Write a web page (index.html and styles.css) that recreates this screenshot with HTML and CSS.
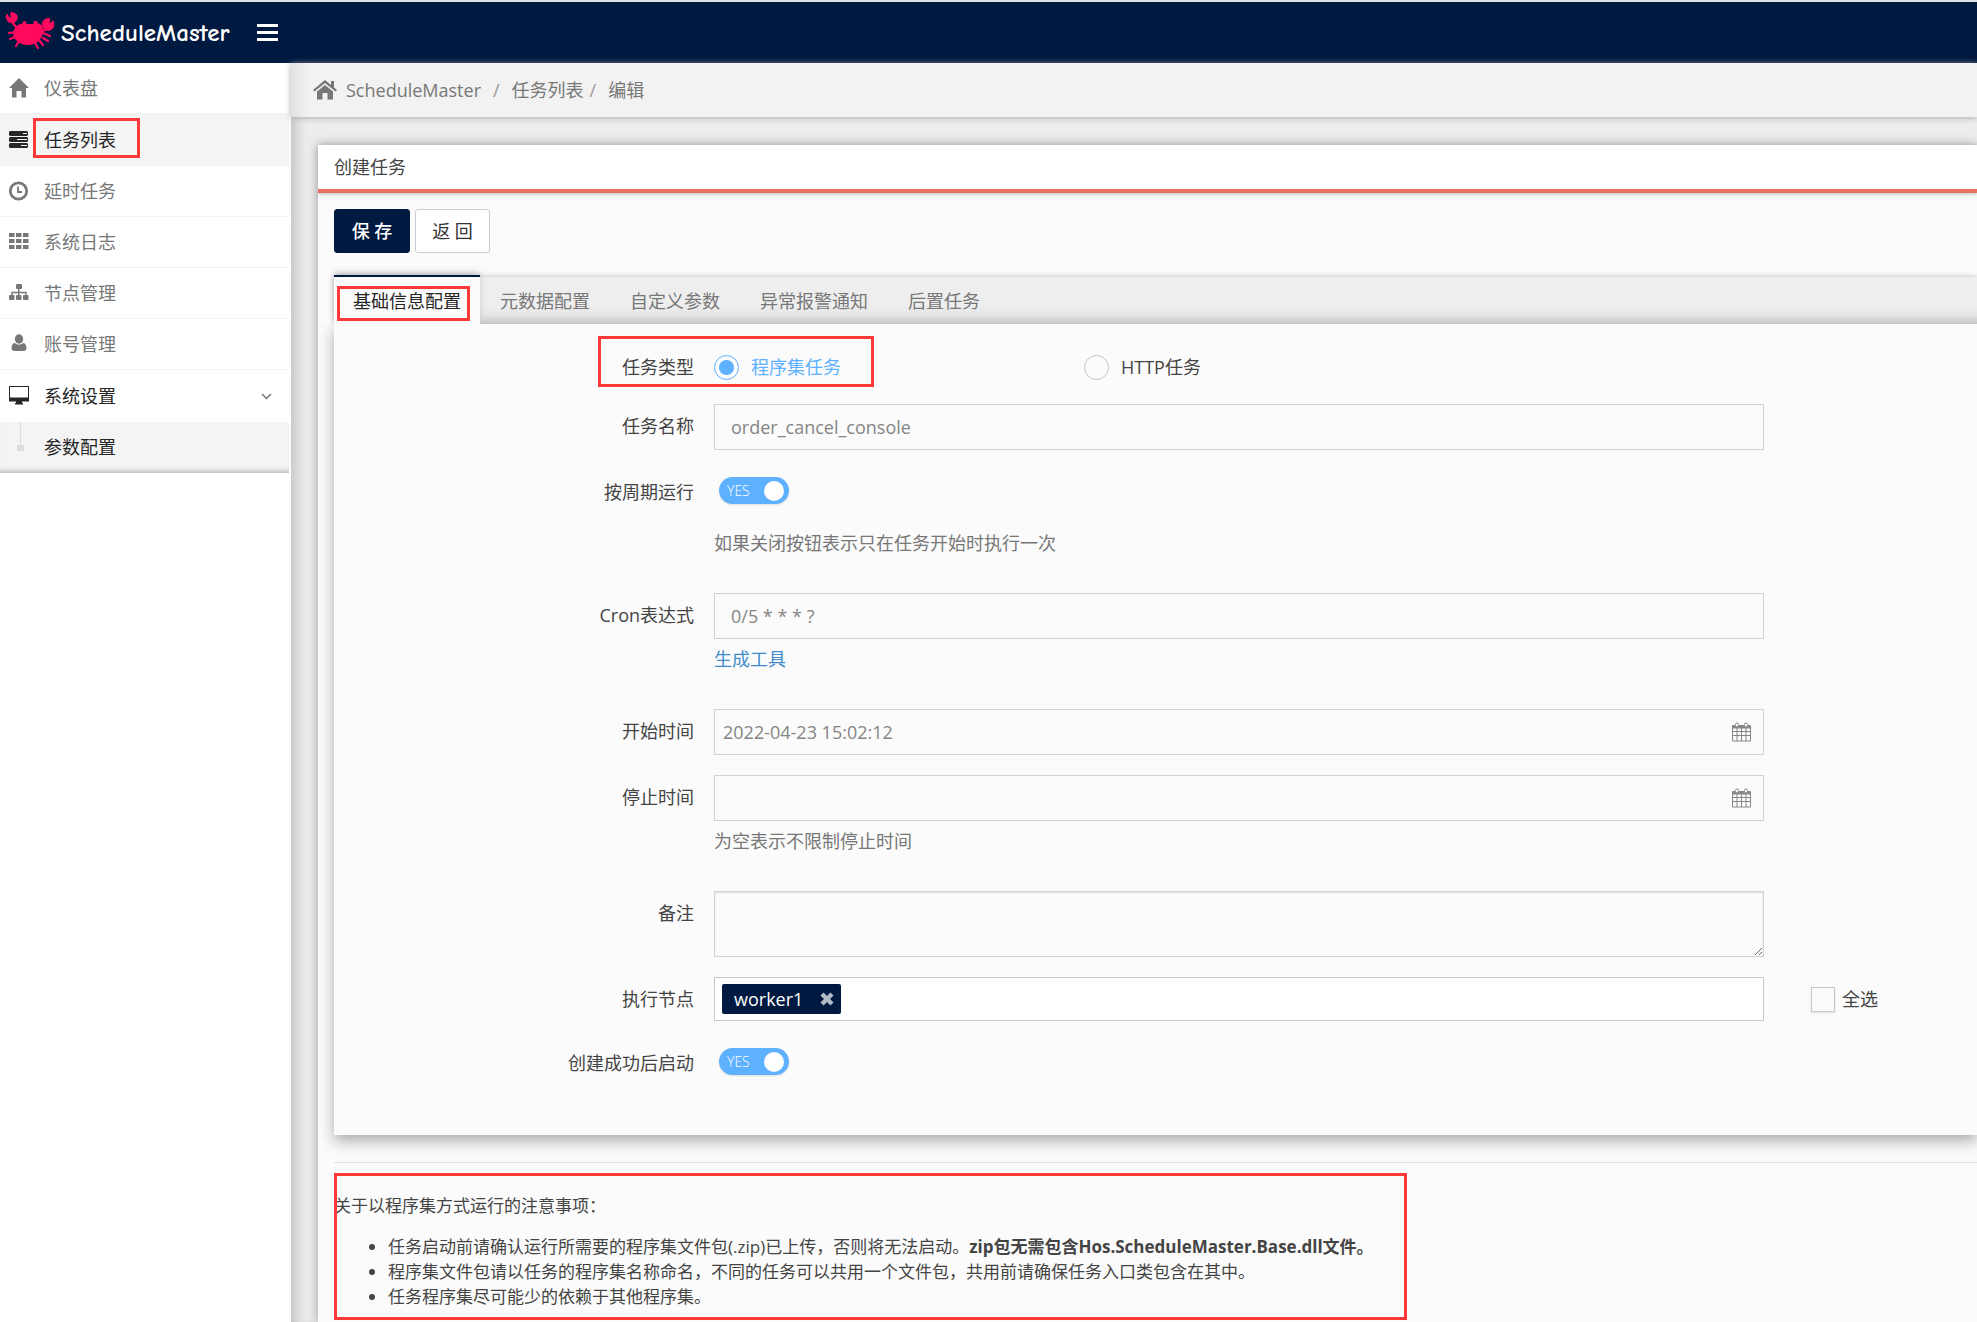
FILE: index.html
```html
<!DOCTYPE html>
<html lang="zh-CN">
<head>
<meta charset="utf-8">
<meta name="viewport" content="width=device-width, initial-scale=1">
<title>ScheduleMaster - 编辑任务</title>
<link rel="stylesheet" href="styles.css">
</head>
<body>
<svg class="defs" aria-hidden="true">
  <symbol id="i-calendar" viewBox="0 0 19 20">
    <path d="M1 3h17a1 1 0 0 1 1 1v14.500a1 1 0 0 1-1 1H1a1 1 0 0 1-1-1V4a1 1 0 0 1 1-1z" fill="#868686"/>
    <path d="M1 6.500h3.500V9H1zM5.500 6.500h3.500V9H5.500zM10 6.500h3.500V9H10zM14.500 6.500H18V9h-3.500zM1 10h3.500v3H1zM5.500 10h3.500v3H5.500zM10 10h3.500v3H10zM14.500 10H18v3h-3.500zM1 14h3.500v4.500H1zM5.500 14h3.500v4.500H5.500zM10 14h3.500v4.500H10zM14.500 14H18v4.500h-3.500z" fill="#fbfbfb"/>
    <rect x="3.500" y="1" width="3" height="4" rx="1.500" fill="#fbfbfb" stroke="#868686"/>
    <rect x="12.500" y="1" width="3" height="4" rx="1.500" fill="#fbfbfb" stroke="#868686"/>
  </symbol>
</svg>

<header class="topbar">
  <a class="brand" href="#">
    <svg class="crab" viewBox="0 0 50 38" aria-hidden="true">
      <g fill="#ff0a5e">
        <path d="M13 13c3-2 5-1 7-2l1 1h8l1-1c3 0 5 0 7 3 2 3 2 8-1 12-3 5-7 7-13 7s-12-3-14-8c-2-4 0-9 4-12z"/>
        <circle cx="19.500" cy="11" r="2"/><circle cx="30.500" cy="11" r="2.200"/>
        <path d="M1 6C0 3 2 2 3 2c0 2 1 3 3 4-1-3-1-5 0-6 4 0 7 3 7 6-1 3-3 5-6 5S2 10 1 6z"/>
        <path d="M49 12c1 4-3 7-6 7-3-1-6-3-6-7 0-4 4-6 7-6 2 1 1 4 0 5 2-1 3-1 4-3 1 1 1 2 1 4z"/>
      </g>
      <g fill="none" stroke="#ff0a5e" stroke-width="2.200" stroke-linecap="round">
        <path d="M7 10l5 6M42 17l-6 3M11 20l-7 1M10 25l-5 2M14 29l-3 5M38 21l7 3M38 26l5 3M34 28l4 5M30 31l3 5"/>
      </g>
    </svg>
    <span class="brand-name">ScheduleMaster</span>
  </a>
  <button class="menu-toggle" type="button" aria-label="菜单"><span></span><span></span><span></span></button>
</header>

<div class="shell">
  <nav class="sidebar">
    <ul class="menu">
      <li><a class="menu-link" href="#">
        <svg class="icon" viewBox="0 0 20 20"><path d="M10 0l10 10h-3v9.500h-4.500V13h-5v6.500H3V10H0z"/></svg>仪表盘</a></li>
      <li><a class="menu-link active" href="#">
        <svg class="icon" viewBox="0 0 20 20"><path d="M1 1h17l1 1v3l-1 1H1L0 5V2zM1 7h17l1 1v3l-1 1H1l-1-1V8zM1 13h17l1 1v3l-1 1H1l-1-1v-3z"/><path d="M14 3.500h4M8 9.500h10M12 15.500h6" stroke="#fff" stroke-width="1.200"/></svg><span class="marked mark-menu">任务列表</span></a></li>
      <li><a class="menu-link" href="#">
        <svg class="icon" viewBox="0 0 20 20"><circle cx="9.500" cy="10" r="8.200" fill="none" stroke="currentColor" stroke-width="2.700"/><path d="M9 5.500V11h4" fill="none" stroke="currentColor" stroke-width="1.800"/></svg>延时任务</a></li>
      <li><a class="menu-link" href="#">
        <svg class="icon" viewBox="0 0 20 20"><path d="M0 1h5.500v4H0zM7 1h5.500v4H7zM14 1h5.500v4H14zM0 7h5.500v4H0zM7 7h5.500v4H7zM14 7h5.500v4H14zM0 13h5.500v4H0zM7 13h5.500v4H7zM14 13h5.500v4H14z"/></svg>系统日志</a></li>
      <li><a class="menu-link" href="#">
        <svg class="icon" viewBox="0 0 20 20"><rect x="7" y="1" width="6" height="5" rx="1"/><rect x="0" y="12" width="5.500" height="5" rx="1"/><rect x="7" y="12" width="5.500" height="5" rx="1"/><rect x="14" y="12" width="5.500" height="5" rx="1"/><path d="M9.700 5v8M3 13V9.500h14V13" fill="none" stroke="currentColor" stroke-width="1.400"/></svg>节点管理</a></li>
      <li><a class="menu-link" href="#">
        <svg class="icon" viewBox="0 0 20 20"><ellipse cx="10" cy="5" rx="4.200" ry="4.700"/><path d="M6 9c2 2 6 2 8 0 2 0 3.500 2 3.500 5 0 2-1 3-3 3h-9c-2 0-3-1-3-3 0-3 1.500-5 3.500-5z"/></svg>账号管理</a></li>
      <li>
        <a class="menu-link open" href="#">
          <svg class="icon" viewBox="0 0 20 20"><path d="M0 0h20v15.500h-7V17h1v1.500H6V17h1v-1.500H0zM1 1v10.500h18V1z" fill-rule="evenodd"/></svg>系统设置
          <svg class="chevron" viewBox="0 0 11 7"><path d="M1 1l4.500 4.500L10 1" fill="none" stroke="#777" stroke-width="1.500"/></svg>
        </a>
        <a class="submenu-link" href="#">参数配置</a>
      </li>
    </ul>
  </nav>

  <main class="content">
    <nav class="breadcrumb" aria-label="路径">
      <svg class="home" viewBox="0 0 24 20"><path d="M12 0l6 5V1h3v6.500l3 2.500-1.500 1.500L12 3 1.500 11.500 0 10zM12 5l8 6.500v8h-5.500V13h-5v6.500H4v-8z"/></svg>
      <a href="#">ScheduleMaster</a><span class="slash">/</span><a href="#">任务列表</a><span class="slash tight">/</span><span>编辑</span>
    </nav>

    <section class="card">
      <h1 class="card-title">创建任务</h1>
      <div class="card-body">
        <div class="actions">
          <button class="btn btn-primary" type="button">保 存</button>
          <button class="btn" type="button">返 回</button>
        </div>

        <div class="tabs" role="tablist">
          <button class="tab active" type="button" role="tab" aria-selected="true"><span class="marked mark-tab">基础信息配置</span></button>
          <button class="tab" type="button" role="tab">元数据配置</button>
          <button class="tab" type="button" role="tab">自定义参数</button>
          <button class="tab" type="button" role="tab">异常报警通知</button>
          <button class="tab" type="button" role="tab">后置任务</button>
        </div>

        <form class="panel">
          <div class="row row-type" role="radiogroup" aria-labelledby="type-label">
            <span class="label marked mark-type" id="type-label">任务类型</span>
            <div class="radios">
              <label class="radio"><input type="radio" name="type" checked><span>程序集任务</span></label>
              <label class="radio"><input type="radio" name="type"><span>HTTP任务</span></label>
            </div>
          </div>
          <div class="row">
            <label class="label" for="name">任务名称</label>
            <input class="input" id="name" type="text" value="order_cancel_console">
          </div>
          <div class="row">
            <label class="label" for="cycle">按周期运行</label>
            <div>
              <div class="switch-line"><span class="switch"><input id="cycle" type="checkbox" checked><span class="yes">YES</span><span class="knob"></span></span></div>
              <p class="hint hint-far">如果关闭按钮表示只在任务开始时执行一次</p>
            </div>
          </div>
          <div class="row">
            <label class="label" for="cron">Cron表达式</label>
            <div>
              <input class="input" id="cron" type="text" value="0/5 * * * ?">
              <p class="hint"><a href="#">生成工具</a></p>
            </div>
          </div>
          <div class="row">
            <label class="label" for="start">开始时间</label>
            <div class="date"><input id="start" type="text" value="2022-04-23 15:02:12"><svg class="calendar"><use href="#i-calendar"/></svg></div>
          </div>
          <div class="row">
            <label class="label" for="stop">停止时间</label>
            <div>
              <div class="date"><input id="stop" type="text"><svg class="calendar"><use href="#i-calendar"/></svg></div>
              <p class="hint">为空表示不限制停止时间</p>
            </div>
          </div>
          <div class="row">
            <label class="label" for="remark">备注</label>
            <textarea class="input remark" id="remark"></textarea>
          </div>
          <div class="row">
            <label class="label" for="nodes">执行节点</label>
            <div class="multi">
              <span class="tag">worker1
                <button class="tag-close" type="button" aria-label="移除 worker1"><svg viewBox="0 0 14 14"><path d="M2 2l10 10M12 2L2 12" stroke="#b2bac6" stroke-width="4.400"/></svg></button>
              </span>
              <input id="nodes" type="text">
            </div>
            <label class="check"><input type="checkbox">全选</label>
          </div>
          <div class="row">
            <label class="label" for="autostart">创建成功后启动</label>
            <div class="switch-line"><span class="switch"><input id="autostart" type="checkbox" checked><span class="yes">YES</span><span class="knob"></span></span></div>
          </div>
        </form>

        <hr class="divider">
        <div class="notes">
          <p>关于以程序集方式运行的注意事项：</p>
          <ul>
            <li>任务启动前请确认运行所需要的程序集文件包(.zip)已上传，否则将无法启动。<strong>zip包无需包含Hos.ScheduleMaster.Base.dll文件。</strong></li>
            <li>程序集文件包请以任务的程序集名称命名，不同的任务可以共用一个文件包，共用前请确保任务入口类包含在其中。</li>
            <li>任务程序集尽可能少的依赖于其他程序集。</li>
          </ul>
        </div>
      </div>
    </section>
  </main>
</div>
</body>
</html>
```
FILE: styles.css
```css
*, *::before, *::after { box-sizing: border-box; }

body {
  margin: 0;
  min-height: 100vh;
  display: flex;
  flex-direction: column;
  border-top: 2px solid #dcdfe4;
  background: #fff;
  color: #444;
  font: 18px/24px "Open Sans", "Noto Sans CJK SC", sans-serif;
}

a { color: inherit; text-decoration: none; }
button, input, textarea { font: inherit; color: inherit; margin: 0; }
p, ul { margin: 0; padding: 0; }
.defs { display: none; }

/* top bar */
.topbar {
  height: 61px;
  display: flex;
  align-items: center;
  background: #001940;
  color: #fff;
}
.brand { display: flex; align-items: center; gap: 6px; padding-left: 5px; }
.crab { width: 50px; height: 38px; margin-bottom: 4px; }
.brand-name { font: 700 25px/32px "Comic Sans MS", "Comic Neue", Lato, sans-serif; width: 177px; }
.menu-toggle {
  display: flex;
  flex-direction: column;
  gap: 4px;
  width: 21px;
  margin-left: 19px;
  padding: 0;
  border: 0;
  background: none;
}
.menu-toggle span { height: 3px; background: #fff; }

.shell { flex: 1; display: flex; }

/* sidebar */
.sidebar { flex: 0 0 291px; padding-right: 2px; }
.menu { list-style: none; }
.menu-link {
  display: flex;
  align-items: center;
  gap: 15px;
  height: 51px;
  padding: 0 17px 0 9px;
  border-bottom: 1px solid #f2f2f2;
  color: #777;
}
.menu-link.active { height: 52px; background: #f4f4f4; color: #262626; }
.menu-link.open { height: 52px; border: 0; color: #262626; }
.icon { flex: none; width: 20px; height: 20px; fill: currentColor; }
.chevron { width: 11px; height: 7px; margin-left: auto; }
.submenu-link {
  display: flex;
  align-items: center;
  position: relative;
  height: 51px;
  padding: 0 0 2px 44px;
  background: #f4f4f4;
  color: #262626;
  box-shadow: inset 0 -6px 5px -4px #bbb;
}
.submenu-link::before {
  content: "";
  position: absolute;
  left: 20px;
  top: 0;
  width: 1px;
  height: 23px;
  background: #ddd;
}
.submenu-link::after {
  content: "";
  position: absolute;
  left: 17px;
  top: 23px;
  width: 7px;
  height: 6px;
  background: #ddd;
}

/* red frames drawn over the highlighted items */
.marked { position: relative; }
.marked::after, .notes::after {
  content: "";
  position: absolute;
  border: 3px solid #fc3838;
  pointer-events: none;
}
.mark-menu::after { inset: -10px -24px -6px -11px; }
.mark-tab::after { inset: -3px -9px -8px -16px; }

/* content */
.content {
  flex: 1;
  min-width: 0;
  display: flex;
  flex-direction: column;
  background: #ededed;
  box-shadow: inset 12px 0 14px -8px #bbb;
}
.breadcrumb {
  display: flex;
  align-items: center;
  height: 54px;
  padding-left: 22px;
  background: linear-gradient(90deg, #e2e2e2, #f2f2f2 18px);
  box-shadow: 0 1px 6px #aaa;
  color: #777;
}
.home { width: 24px; height: 20px; margin-right: 9px; fill: #777; }
.slash { margin: 0 12px; color: #999; }
.slash.tight { margin-left: 6px; }

.card {
  flex: 1;
  margin: 28px 0 0 27px;
  background: #fbfbfb;
  box-shadow: 0 0 10px #999;
}
.card-title {
  margin: 0;
  padding: 10px 16px;
  border-bottom: 4px solid #e8705f;
  background: #fff;
  box-shadow: 0 1px 4px #bbb;
  font-size: 18px;
  font-weight: 400;
}
.card-body { padding: 16px 0 2px 16px; }

.actions { display: flex; gap: 5px; }
.btn {
  min-width: 75px;
  height: 44px;
  padding: 0 16px;
  border: 1px solid #ccc;
  border-radius: 3px;
  background: #fff;
  color: #333;
}
.btn-primary { min-width: 76px; border-color: #001940; background: #001940; color: #fff; font-weight: 500; }

.tabs {
  display: flex;
  align-items: stretch;
  height: 47px;
  margin-top: 24px;
  background: linear-gradient(#eee 60%, #e6e6e6 80%, #c6c6c6);
  box-shadow: 0 0 6px #bbb;
}
.tab {
  padding: 0;
  margin-left: 20px;
  border: 0;
  background: none;
  color: #777;
}
.tab + .tab + .tab { margin-left: 40px; }
.tab.active {
  width: 146px;
  margin: -2px 0 0;
  border-top: 2px solid #001940;
  background: #fbfbfb;
  box-shadow: 0 -3px 6px -1px #bbb;
  color: #262626;
}

/* form */
.panel {
  position: relative;
  display: flex;
  flex-direction: column;
  gap: 20px;
  padding: 26px 0 50px;
  background: #fbfbfb;
  box-shadow: 0 6px 14px #aaa;
  clip-path: inset(0 0 -30px -20px);
}
.row {
  display: grid;
  grid-template-columns: 360px minmax(0, 1fr) 186px;
  column-gap: 20px;
  padding-right: 7px;
}
.label { line-height: 44px; text-align: right; }
.row-type .label { line-height: 34px; }
.mark-type::after { left: 264px; top: -14px; width: 276px; height: 51px; z-index: 1; }

.radios { display: flex; }
.radio { display: flex; align-items: center; gap: 12px; width: 370px; }
.radio input {
  appearance: none;
  width: 25px;
  height: 25px;
  border: 1px solid #c4c4c4;
  border-radius: 50%;
  background: #fbfbfb;
}
.radio input:checked {
  border-color: #5eb1ff;
  background: radial-gradient(circle, #5eb1ff 7px, #fbfbfb 8px);
}
.radio input:checked + span { color: #5eb1ff; }

.input {
  display: block;
  width: 100%;
  height: 46px;
  padding: 0 16px;
  border: 1px solid #d2d2d2;
  border-radius: 0;
  background: #fbfbfb;
  color: #858585;
}
.remark { height: 66px; resize: vertical; box-shadow: inset 0 1px 2px #ddd; }
.date {
  display: flex;
  align-items: center;
  height: 46px;
  padding: 0 12px 0 8px;
  border: 1px solid #d2d2d2;
  color: #858585;
}
.date input { flex: 1; min-width: 0; padding: 0; border: 0; background: none; }
.calendar { width: 19px; height: 20px; }

.hint { margin: 10px 0 20px; line-height: 20px; color: #777; }
.hint-far { margin: 19px 0 20px; }
.hint a { color: #428bca; }

.switch-line { height: 44px; padding: 7px 0 0 5px; }
.switch {
  position: relative;
  display: flex;
  align-items: center;
  justify-content: space-between;
  width: 70px;
  height: 27px;
  padding: 0 5px 0 8px;
  border-radius: 14px;
  background: #5eb1ff;
  box-shadow: 0 1px 2px #ddd;
}
.switch input { position: absolute; inset: 0; width: 100%; height: 100%; opacity: 0; }
.yes { color: #fff; font-size: 14px; font-weight: 300; }
.knob { width: 20px; height: 20px; border-radius: 50%; background: #fff; }

.multi {
  display: flex;
  align-items: center;
  height: 44px;
  padding-left: 7px;
  border: 1px solid #c8c8c8;
  background: #fff;
}
.multi input { flex: 1; min-width: 0; border: 0; outline: 0; }
.tag {
  display: flex;
  align-items: center;
  justify-content: space-between;
  width: 119px;
  height: 30px;
  padding: 0 7px 0 12px;
  border-radius: 2px;
  background: #001940;
  color: #fff;
}
.tag-close { display: flex; padding: 0; border: 0; background: none; }
.tag-close svg { width: 14px; height: 14px; }
.check { display: flex; align-items: center; gap: 7px; margin-left: 27px; }
.check input {
  appearance: none;
  width: 24px;
  height: 25px;
  border: 1px solid #c8c8c8;
  background: #fbfbfb;
  box-shadow: 0 1px 2px #ddd;
}

.divider { margin: 27px 0 10px; border: 0; border-top: 1px solid #e2e2e2; }
.notes {
  position: relative;
  max-width: 1073px;
  padding: 20px 0 11px;
  font-size: 17px;
  line-height: 25px;
  white-space: nowrap;
}
.notes::after { inset: 0; }
.notes ul { margin-top: 16px; padding-left: 54px; }
```
